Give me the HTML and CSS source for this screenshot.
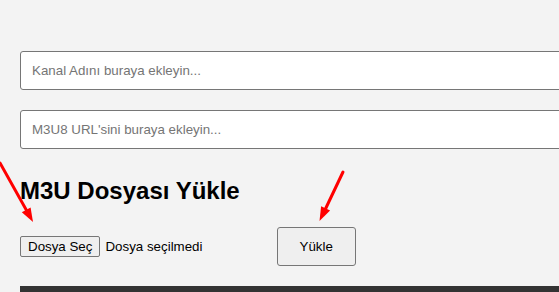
FILE: index.html
```html
<!DOCTYPE html>
<html lang="tr">
<head>
    <meta charset="UTF-8">
    <meta name="viewport" content="width=device-width, initial-scale=1.0">
    <title>M3U Yükle</title>
    <link rel="stylesheet" href="styles.css">
</head>
<body>
    <div class="container">
        <input type="text" class="field" placeholder="Kanal Adını buraya ekleyin...">
        <input type="text" class="field" placeholder="M3U8 URL'sini buraya ekleyin...">

        <h2>M3U Dosyası Yükle</h2>
        <div class="upload-row">
            <label class="file-picker">
                <input type="file" accept=".m3u">
                <span class="file-button">Dosya Seç</span>
                <span class="file-name">Dosya seçilmedi</span>
            </label>
            <button type="button" class="upload-button">Yükle</button>
        </div>

        <div class="list-bar"></div>
    </div>

    <!-- ekran görüntüsündeki kırmızı oklar -->
    <svg class="arrows" width="559" height="292" viewBox="0 0 559 292">
        <line x1="0" y1="163" x2="28" y2="213" stroke="#ff0000" stroke-width="3" stroke-linecap="round"/>
        <polygon points="33,222 21.8,212.2 30.6,207.4" fill="#ff0000"/>
        <line x1="343" y1="172" x2="324" y2="212" stroke="#ff0000" stroke-width="3" stroke-linecap="round"/>
        <polygon points="319.5,221 321.1,206.2 330.1,210.6" fill="#ff0000"/>
    </svg>
</body>
</html>
```

FILE: styles.css
```css
body {
    font-family: "Liberation Sans", Arial, sans-serif;
    margin: 0;
    padding: 0;
    background-color: #f3f3f3;
    overflow: hidden;
}
.container {
    padding: 51px 20px 20px;
}
.field {
    display: block;
    width: 100%;
    padding: 11px;
    margin: 0 0 20px;
    font-family: "Liberation Sans", Arial, sans-serif;
    font-size: 13.33px;
    line-height: 15px;
    border: 1px solid #767676;
    border-radius: 3px;
    background-color: white;
}
.field::placeholder {
    color: #757575;
}
h2 {
    font-size: 24px;
    margin: 28px 0 22px;
    color: black;
}
.upload-row {
    display: flex;
    align-items: center;
}
.file-picker {
    display: flex;
    align-items: center;
    font-size: 13.33px;
    cursor: pointer;
}
.file-picker input {
    display: none;
}
.file-button {
    padding: 2px 7px;
    line-height: 15px;
    border: 1px solid #767676;
    border-radius: 2px;
    background-color: #efefef;
}
.file-name {
    margin-left: 5px;
}
.upload-button {
    margin-left: 74px;
    padding: 11px 22px;
    font-family: "Liberation Sans", Arial, sans-serif;
    font-size: 13.33px;
    line-height: 15px;
    border: 1px solid #767676;
    border-radius: 3px;
    background-color: #efefef;
    color: black;
    cursor: pointer;
}
.list-bar {
    margin-top: 20px;
    height: 30px;
    margin-right: -40px;
    background-color: #333;
}
.arrows {
    position: absolute;
    top: 0;
    left: 0;
    pointer-events: none;
}
```
